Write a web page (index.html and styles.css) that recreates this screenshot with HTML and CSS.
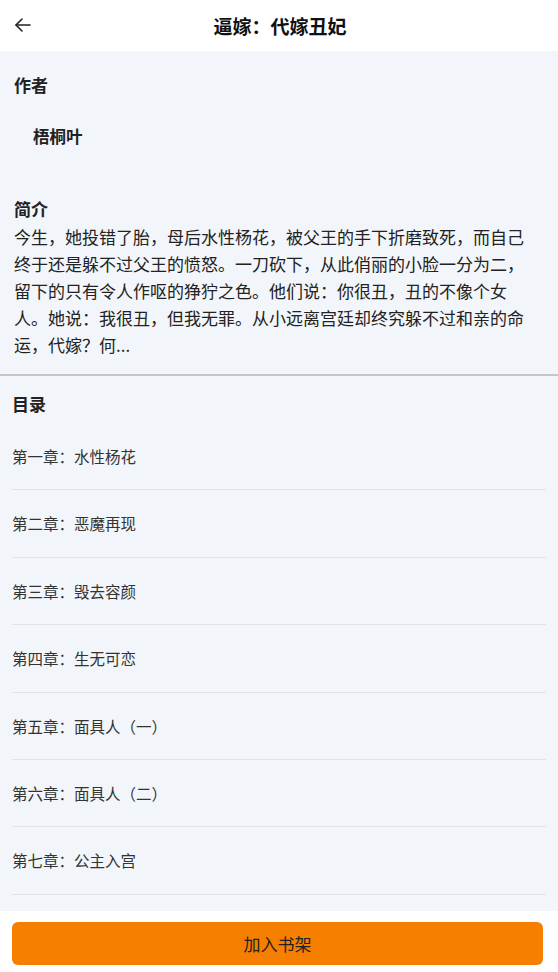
FILE: index.html
```html
<!DOCTYPE html>
<html lang="zh-CN">
<head>
    <meta charset="UTF-8">
    <meta name="viewport" content="width=device-width, initial-scale=1.0">
    <title>逼嫁：代嫁丑妃</title>
    <link rel="stylesheet" href="styles.css">
</head>
<body>
    <div class="page">
        <header class="top-bar">
            <a class="back-btn" href="#">
                <svg width="20" height="20" viewBox="0 0 20 20" fill="none" stroke="#222" stroke-width="1.6" stroke-linecap="round" stroke-linejoin="round">
                    <path d="M17 10H3"/>
                    <path d="M9 4L3 10L9 16"/>
                </svg>
            </a>
            <h1 class="book-title">逼嫁：代嫁丑妃</h1>
        </header>

        <main class="content">
            <section class="book-info">
                <h2 class="info-label">作者</h2>
                <p class="author-name">梧桐叶</p>
                <h2 class="info-label intro-label">简介</h2>
                <p class="intro-text">今生，她投错了胎，母后水性杨花，被父王的手下折磨致死，而自己终于还是躲不过父王的愤怒。一刀砍下，从此俏丽的小脸一分为二，留下的只有令人作呕的狰狞之色。他们说：你很丑，丑的不像个女人。她说：我很丑，但我无罪。从小远离宫廷却终究躲不过和亲的命运，代嫁？何...</p>
            </section>

            <section class="catalog">
                <h2 class="catalog-title">目录</h2>
                <ul class="chapter-list">
                    <li class="chapter">第一章：水性杨花</li>
                    <li class="chapter">第二章：恶魔再现</li>
                    <li class="chapter">第三章：毁去容颜</li>
                    <li class="chapter">第四章：生无可恋</li>
                    <li class="chapter">第五章：面具人（一）</li>
                    <li class="chapter">第六章：面具人（二）</li>
                    <li class="chapter">第七章：公主入宫</li>
                </ul>
            </section>
        </main>

        <footer class="bottom-bar">
            <button class="add-shelf">加入书架</button>
        </footer>
    </div>
</body>
</html>
```

FILE: styles.css
```css
/* Basic styling */
* {
    box-sizing: border-box;
}

body {
    margin: 0;
    padding: 0;
    font-family: "Noto Sans CJK SC", "Noto Sans", sans-serif;
    color: #222;
    background-color: #f2f5f9;
}

.page {
    display: flex;
    flex-direction: column;
    height: 100vh;
}

/* Top bar */
.top-bar {
    position: relative;
    height: 51px;
    background-color: #fff;
    display: flex;
    align-items: center;
    justify-content: center;
    flex-shrink: 0;
}

.back-btn {
    position: absolute;
    left: 13px;
    top: 15px;
    display: flex;
}

.book-title {
    margin: 0 0 0 2px;
    font-size: 19px;
    font-weight: bold;
    line-height: 28px;
    color: #111;
}

/* Scrolling content */
.content {
    flex: 1;
    overflow: hidden;
}

.book-info {
    padding: 21px 28px 16px 14px;
    border-bottom: 2px solid #c4c6c9;
}

.info-label {
    margin: 0;
    font-size: 17px;
    font-weight: bold;
    line-height: 26px;
}

.author-name {
    margin: 25px 0 0 19px;
    font-size: 16.5px;
    font-weight: bold;
    line-height: 26px;
}

.intro-label {
    margin-top: 47px;
}

.intro-text {
    margin: 1px 0 0;
    font-size: 17px;
    line-height: 27px;
}

/* Catalog */
.catalog {
    padding: 15px 12px 0 12px;
}

.catalog-title {
    margin: 0 0 6px;
    font-size: 17px;
    font-weight: bold;
    line-height: 26px;
}

.chapter-list {
    list-style: none;
    margin: 0;
    padding: 0;
}

.chapter {
    padding: 22px 0 21.4px;
    font-size: 15.5px;
    line-height: 23px;
    color: #333;
    border-bottom: 1.5px solid #dfe2e6;
}

/* Bottom bar */
.bottom-bar {
    flex-shrink: 0;
    background-color: #fff;
    padding: 11px 15px 7px 12px;
}

.add-shelf {
    display: block;
    width: 100%;
    height: 43px;
    border: none;
    border-radius: 6px;
    background-color: #f77f00;
    color: #222;
    font-family: "Noto Sans CJK SC", "Noto Sans", sans-serif;
    font-size: 17px;
    cursor: pointer;
}
```
